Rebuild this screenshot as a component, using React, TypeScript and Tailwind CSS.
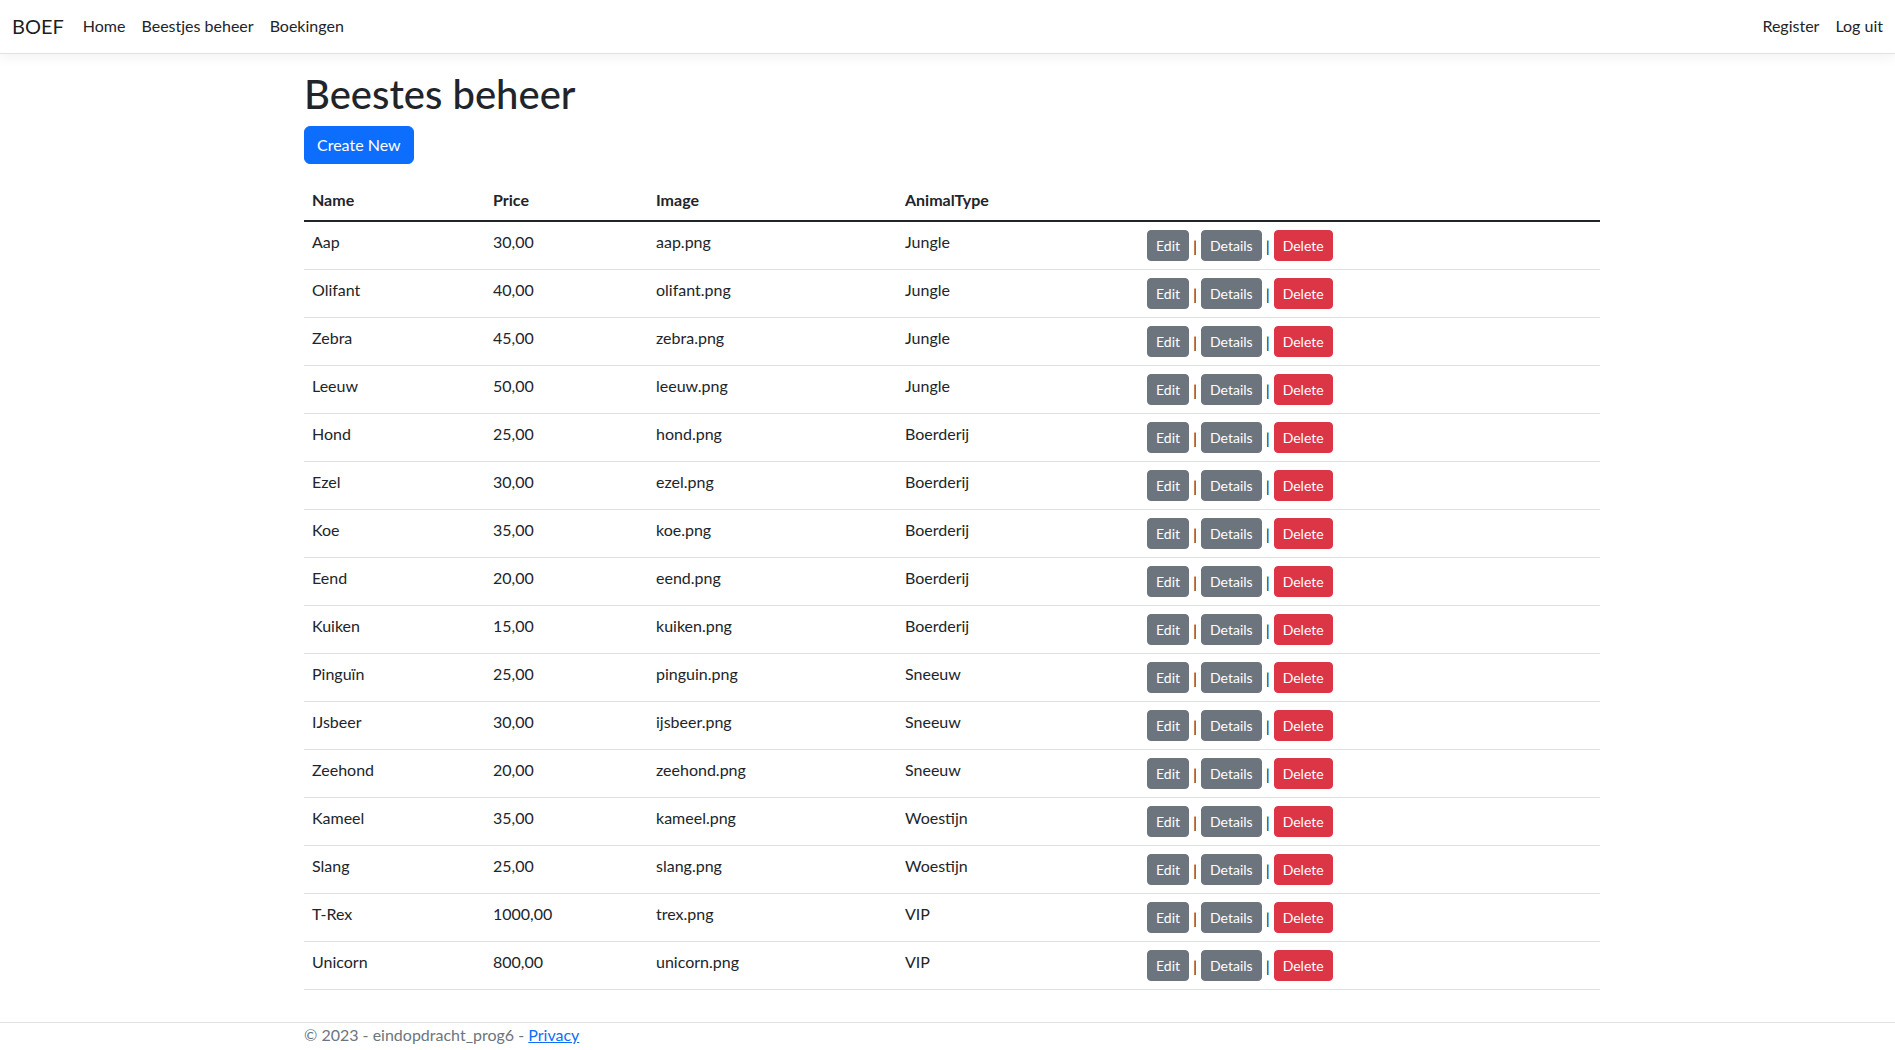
import React from "react";

interface Animal {
  name: string;
  price: string;
  image: string;
  type: string;
}

const animals: Animal[] = [
  { name: "Aap", price: "30,00", image: "aap.png", type: "Jungle" },
  { name: "Olifant", price: "40,00", image: "olifant.png", type: "Jungle" },
  { name: "Zebra", price: "45,00", image: "zebra.png", type: "Jungle" },
  { name: "Leeuw", price: "50,00", image: "leeuw.png", type: "Jungle" },
  { name: "Hond", price: "25,00", image: "hond.png", type: "Boerderij" },
  { name: "Ezel", price: "30,00", image: "ezel.png", type: "Boerderij" },
  { name: "Koe", price: "35,00", image: "koe.png", type: "Boerderij" },
  { name: "Eend", price: "20,00", image: "eend.png", type: "Boerderij" },
  { name: "Kuiken", price: "15,00", image: "kuiken.png", type: "Boerderij" },
  { name: "Pinguïn", price: "25,00", image: "pinguin.png", type: "Sneeuw" },
  { name: "IJsbeer", price: "30,00", image: "ijsbeer.png", type: "Sneeuw" },
  { name: "Zeehond", price: "20,00", image: "zeehond.png", type: "Sneeuw" },
  { name: "Kameel", price: "35,00", image: "kameel.png", type: "Woestijn" },
  { name: "Slang", price: "25,00", image: "slang.png", type: "Woestijn" },
  { name: "T-Rex", price: "1000,00", image: "trex.png", type: "VIP" },
  { name: "Unicorn", price: "800,00", image: "unicorn.png", type: "VIP" },
];

const Navbar: React.FC = () => (
  <nav className="flex h-[54px] items-center justify-between border-b border-[#dee2e6] bg-white px-3 pb-[2px] shadow-[0_4px_12px_rgba(0,0,0,0.05)]">
    <div className="flex items-center">
      <a className="mr-[11px] text-[20px] leading-[30px] text-black/90">BOEF</a>
      <a className="px-2 text-base text-[#212529]">Home</a>
      <a className="px-2 text-base text-[#212529]">Beestjes beheer</a>
      <a className="px-2 text-base text-[#212529]">Boekingen</a>
    </div>
    <div className="flex items-center">
      <a className="px-2 text-base text-[#212529]">Register</a>
      <a className="pl-2 text-base text-[#212529]">Log uit</a>
    </div>
  </nav>
);

const RowActions: React.FC = () => (
  <div className="flex items-center text-base">
    <button className="rounded-[4px] border border-[#6c757d] bg-[#6c757d] px-2 py-1 text-sm leading-[21px] text-white">
      Edit
    </button>
    <span className="mx-[4px] text-[#212529]">|</span>
    <button className="rounded-[4px] border border-[#6c757d] bg-[#6c757d] px-2 py-1 text-sm leading-[21px] text-white">
      Details
    </button>
    <span className="mx-[4px] text-[#212529]">|</span>
    <button className="rounded-[4px] border border-[#dc3545] bg-[#dc3545] px-2 py-1 text-sm leading-[21px] text-white">
      Delete
    </button>
  </div>
);

export default function App() {
  return (
    <div
      className="min-h-[1050px] bg-white text-base leading-6 text-[#212529]"
      style={{ fontFamily: "Lato, 'Noto Sans', sans-serif" }}
    >
      <Navbar />

      <main className="ml-[292px] mt-4 w-[1320px] px-3 pb-4">
        <h1 className="mb-2 text-[40px] font-medium leading-[48px]">Beestes beheer</h1>
        <p className="mb-4">
          <button className="rounded-[6px] border border-[#0d6efd] bg-[#0d6efd] px-3 py-[6px] text-base leading-6 text-white">
            Create New
          </button>
        </p>

        <table className="mb-4 w-full table-fixed border-collapse text-left">
          <thead>
            <tr className="border-b-2 border-[#212529]">
              <th className="w-[181px] p-2 font-bold">Name</th>
              <th className="w-[163px] p-2 font-bold">Price</th>
              <th className="w-[249px] p-2 font-bold">Image</th>
              <th className="w-[242px] p-2 font-bold">AnimalType</th>
              <th className="p-2"></th>
            </tr>
          </thead>
          <tbody>
            {animals.map((a) => (
              <tr key={a.name} className="border-b border-[#dee2e6]">
                <td className="p-2 align-top">{a.name}</td>
                <td className="p-2 align-top">{a.price}</td>
                <td className="p-2 align-top">{a.image}</td>
                <td className="p-2 align-top">{a.type}</td>
                <td className="p-2 align-top">
                  <RowActions />
                </td>
              </tr>
            ))}
          </tbody>
        </table>
      </main>

      <footer className="border-t border-[#dee2e6]">
        <div className="ml-[292px] w-[1320px] px-3 text-[#6c757d]">
          © 2023 - eindopdracht_prog6 -{" "}
          <a className="text-[#0d6efd] underline">Privacy</a>
        </div>
      </footer>
    </div>
  );
}
